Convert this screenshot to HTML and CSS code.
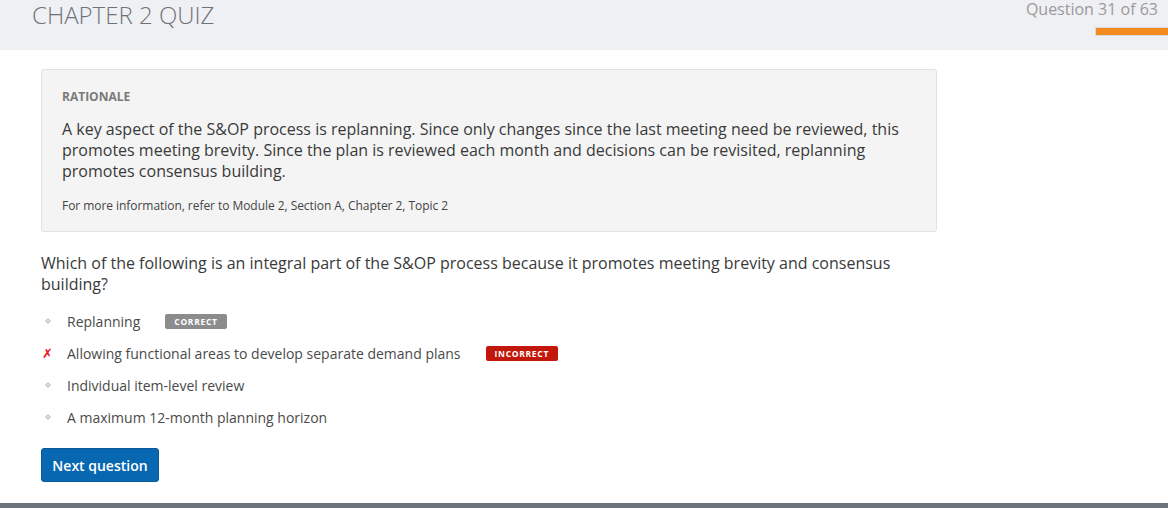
FILE: index.html
```html
<!DOCTYPE html>
<html lang="en">
<head>
<meta charset="utf-8">
<title>Chapter 2 Quiz</title>
<link rel="stylesheet" href="styles.css">
</head>
<body>
<header class="topbar">
  <h1 class="quiz-title">CHAPTER 2 QUIZ</h1>
  <div class="progress">
    <div class="progress-label">Question 31 of 63</div>
    <div class="progress-bar"></div>
  </div>
</header>
<main class="content">
  <section class="rationale">
    <h2 class="rationale-title">RATIONALE</h2>
    <p class="rationale-text">A key aspect of the S&amp;OP process is replanning. Since only changes since the last meeting need be reviewed, this promotes meeting brevity. Since the plan is reviewed each month and decisions can be revisited, replanning promotes consensus building.</p>
    <p class="rationale-ref">For more information, refer to Module 2, Section A, Chapter 2, Topic 2</p>
  </section>
  <p class="question">Which of the following is an integral part of the S&amp;OP process because it promotes meeting brevity and consensus building?</p>
  <ul class="options">
    <li class="option"><span class="marker"><span class="dot"></span></span><span class="option-text">Replanning</span><span class="badge badge-correct">CORRECT</span></li>
    <li class="option"><span class="marker"><span class="cross">✗</span></span><span class="option-text">Allowing functional areas to develop separate demand plans</span><span class="badge badge-incorrect">INCORRECT</span></li>
    <li class="option"><span class="marker"><span class="dot"></span></span><span class="option-text">Individual item-level review</span></li>
    <li class="option"><span class="marker"><span class="dot"></span></span><span class="option-text">A maximum 12-month planning horizon</span></li>
  </ul>
  <button class="next-btn" type="button">Next question</button>
</main>
<footer class="footer"></footer>
</body>
</html>
```

FILE: styles.css
```css
html, body {
  margin: 0;
  padding: 0;
  height: 100%;
  overflow: hidden;
}
body {
  font-family: "Open Sans", "Liberation Sans", sans-serif;
  color: #333;
  background: #fff;
  display: flex;
  flex-direction: column;
}
.topbar {
  height: 50px;
  background: #eff0f4;
  display: flex;
  justify-content: space-between;
  align-items: flex-start;
  flex-shrink: 0;
}
.quiz-title {
  margin: 0 0 0 32px;
  font-size: 24px;
  line-height: 30px;
  font-weight: 300;
  color: #6f7278;
}
.progress {
  display: flex;
  flex-direction: column;
  align-items: flex-end;
}
.progress-label {
  font-size: 16px;
  line-height: 18px;
  color: #9a9a9a;
  margin-right: 10px;
}
.progress-bar {
  width: 72px;
  height: 7px;
  margin-top: 9px;
  background: #f28c1e;
  border: 1px solid #d9d9d9;
  border-right: 0;
}
.content {
  flex: 1;
  padding: 19px 0 0 41px;
}
.rationale {
  width: 854px;
  background: #f4f4f4;
  border: 1px solid #e1e1e1;
  border-radius: 3px;
  padding: 19px 20px 17px 20px;
}
.rationale-title {
  margin: 0;
  font-size: 12px;
  line-height: 16px;
  font-weight: 700;
  color: #7a7a7a;
}
.rationale-text {
  margin: 14px 0 0 0;
  font-size: 16px;
  line-height: 21px;
  color: #3a3a3a;
}
.rationale-ref {
  margin: 16px 0 0 0;
  font-size: 12px;
  line-height: 16px;
  letter-spacing: -0.05px;
  color: #444;
}
.question {
  margin: 21px 0 0 0;
  width: 880px;
  font-size: 16px;
  line-height: 21px;
  color: #3a3a3a;
}
.options {
  list-style: none;
  margin: 10px 0 0 0;
  padding: 0;
}
.option {
  display: flex;
  align-items: center;
  height: 32px;
  font-size: 14px;
  color: #4a4a4a;
}
.marker {
  width: 26px;
  display: flex;
  align-items: center;
  justify-content: flex-start;
}
.dot {
  width: 2px;
  height: 2px;
  margin-left: 5px;
  background: #e4e4e4;
  border: 1px solid #bdbdbd;
  transform: rotate(45deg);
}
.cross {
  font-family: "DejaVu Sans", sans-serif;
  color: #e8141c;
  font-size: 13px;
  font-weight: 700;
  font-style: italic;
  margin-left: 1px;
}
.badge {
  margin-left: 25px;
  font-size: 8.5px;
  font-weight: 700;
  letter-spacing: 0.7px;
  color: #fff;
  border-radius: 2px;
  padding: 2px 9px;
  line-height: 11px;
}
.badge-correct {
  background: #8c8c8c;
}
.badge-incorrect {
  background: #c3170b;
}
.next-btn {
  margin-top: 15px;
  font-family: "Open Sans", "Liberation Sans", sans-serif;
  font-size: 14px;
  font-weight: 600;
  color: #fff;
  background: #0767b0;
  border: 1px solid #0a5a99;
  border-radius: 3px;
  height: 34px;
  width: 118px;
  padding: 0;
  cursor: pointer;
}
.footer {
  height: 5px;
  background: #6b747b;
  flex-shrink: 0;
}
```
